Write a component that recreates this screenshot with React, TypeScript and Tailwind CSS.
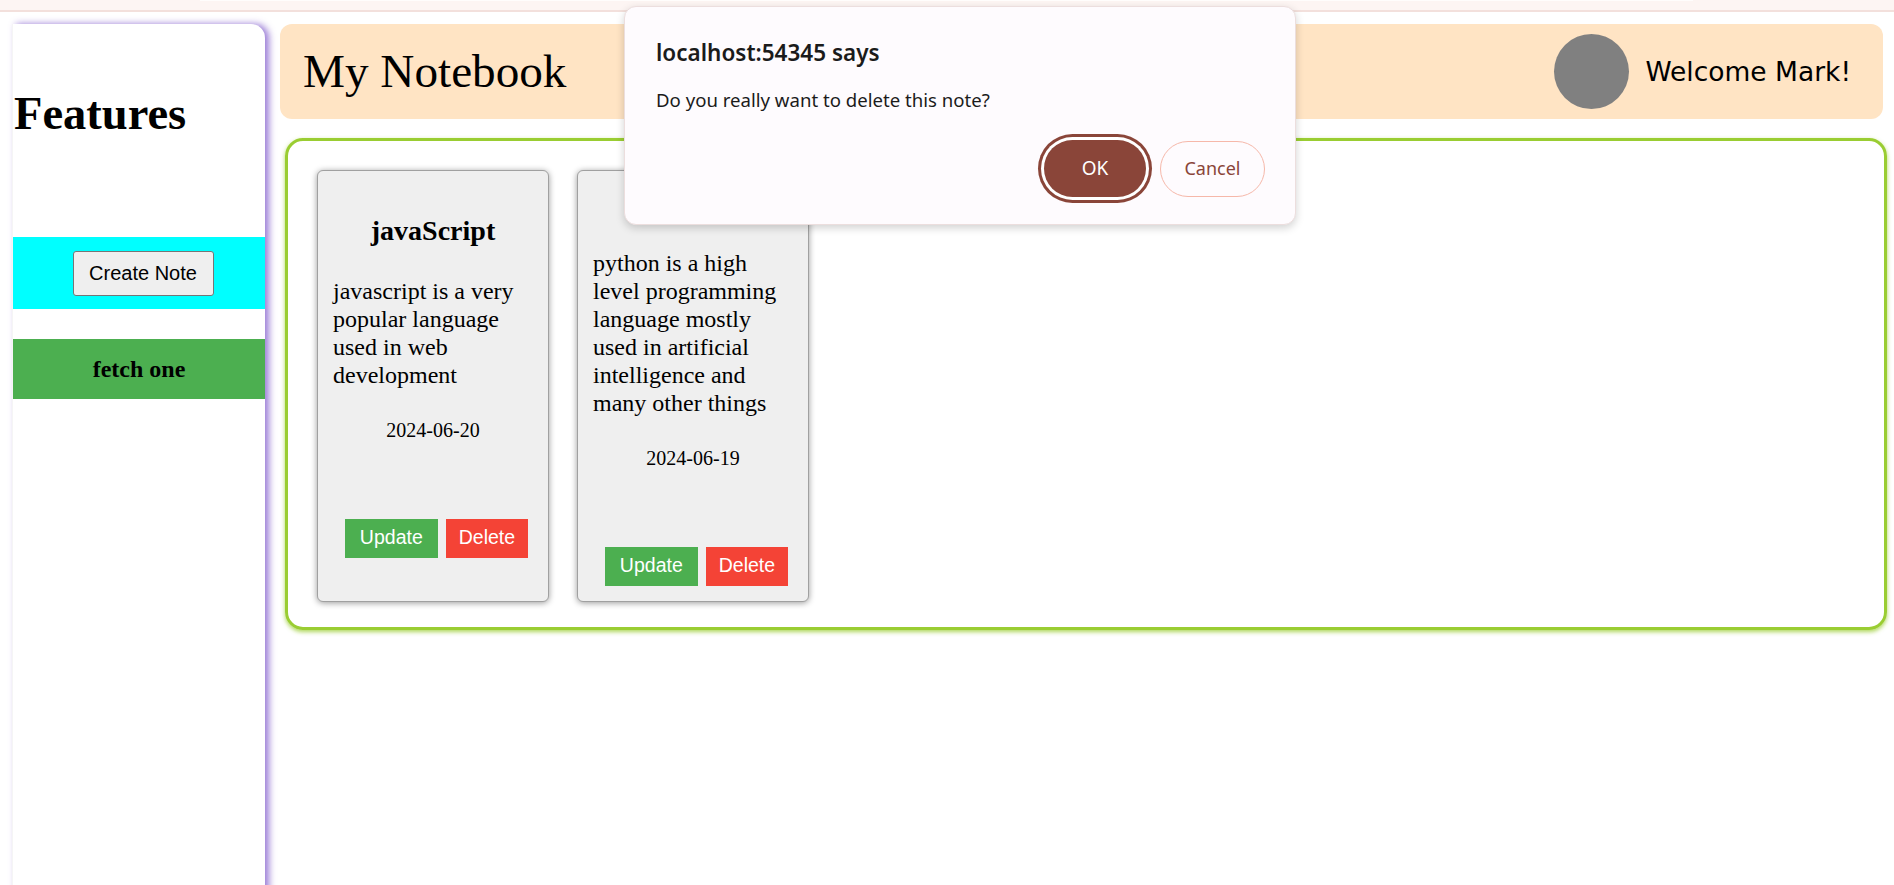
import React from "react";

const serif = "font-['Liberation_Serif','Times_New_Roman',serif]";
const sans = "font-['Liberation_Sans',Arial,sans-serif]";

function Card({ title, body, date }: { title: string; body: string; date: string }) {
  return (
    <div className="w-[232px] h-[432px] bg-[#efefef] border border-[#a0a0a0] rounded-[6px] shadow-[0_1px_6px_rgba(0,0,0,0.4)] flex flex-col justify-center px-[15px] text-black">
      <h3 className="text-[28px] leading-[32px] font-bold text-center">{title}</h3>
      <p className="mt-[30px] text-[24px] leading-[28px]">{body}</p>
      <div className="mt-[30px] text-[20px] leading-[23px] text-center">{date}</div>
      <div className="mt-[77px] flex justify-center gap-[8px] pl-[7px]">
        <button className={`h-[39px] px-[15px] bg-[#4caf50] text-white text-[19.5px] ${sans}`}>Update</button>
        <button className={`h-[39px] px-[13px] bg-[#f44336] text-white text-[19.5px] ${sans}`}>Delete</button>
      </div>
    </div>
  );
}

export default function App() {
  return (
    <div className={`relative w-[1894px] h-[885px] overflow-hidden bg-white ${serif}`}>
      {/* browser strip */}
      <div className="h-[12px] bg-[#fdf5f3] border-b-2 border-[#f3e0dc]">
        <div className="ml-[200px] w-[1493px] h-[1px] bg-[#fffdfc]" />
      </div>

      <div className="flex pl-[12px] pt-[12px] gap-[15px]">
        {/* sidebar */}
        <aside className="w-[253px] h-[873px] shrink-0 bg-white rounded-tr-[14px] border-l border-[#f5f5f5] shadow-[4px_0_7px_rgba(120,80,200,0.75)] flex flex-col">
          <h1 className="mt-[62px] pl-[1px] text-[46.5px] leading-[55px] font-bold text-black">Features</h1>
          <div className="mt-[96px] h-[72px] bg-[#00ffff] flex items-center justify-center pl-[8px]">
            <button className={`w-[141px] h-[45px] bg-[#efefef] border border-[#767676] rounded-[3px] text-[20px] text-black ${sans}`}>
              Create Note
            </button>
          </div>
          <div className="mt-[30px] h-[60px] bg-[#4caf50] flex items-center justify-center text-[24px] font-bold text-black">
            fetch one
          </div>
        </aside>

        {/* main */}
        <main className="w-[1607px] flex flex-col">
          <header className="w-[1603px] h-[95px] bg-[#ffe4c4] rounded-[12px] flex items-center justify-between pl-[23px] pr-[32px]">
            <div className="text-[47.2px] leading-[55px] text-black">My Notebook</div>
            <div className="flex items-center gap-[16px]">
              <div className="w-[75px] h-[75px] rounded-full bg-[#808080]" />
              <span className="font-['DejaVu_Sans',Verdana,sans-serif] text-[26.5px] text-black">Welcome Mark!</span>
            </div>
          </header>

          <section className="mt-[19px] ml-[5px] w-[1602px] h-[492px] border-[3px] border-[#9acd32] rounded-[18px] shadow-[0_2px_4px_rgba(154,205,50,0.8)] flex items-start gap-[28px] pl-[29px] pt-[29px]">
            <Card title="javaScript" body="javascript is a very popular language used in web development" date="2024-06-20" />
            <Card
              title="python"
              body="python is a high level programming language mostly used in artificial intelligence and many other things"
              date="2024-06-19"
            />
          </section>
        </main>
      </div>

      {/* alert dialog */}
      <div className="absolute left-[624px] top-[6px] w-[672px] h-[219px] bg-[#fefbfe] border border-[#ecdede] rounded-[12px] shadow-[0_3px_8px_rgba(0,0,0,0.18)] flex flex-col pl-[31px] pr-[30px] pt-[31px] font-['Noto_Sans',sans-serif] text-[#1b1b1b]">
        <div className="text-[22.5px] leading-[30px] font-semibold">localhost:54345 says</div>
        <div className="mt-[20px] text-[18.6px] leading-[24px]">Do you really want to delete this note?</div>
        <div className="mt-[28px] flex items-center justify-end gap-[14px]">
          <button className="w-[102px] h-[57px] rounded-full bg-[#8a4539] text-white text-[19px] shadow-[0_0_0_3px_#ffffff,0_0_0_6px_#8a4539]">
            OK
          </button>
          <button className="w-[105px] h-[56px] rounded-full border-[1.5px] border-[#f6b8aa] bg-[#fefbfe] text-[#8a4539] text-[18px]">
            Cancel
          </button>
        </div>
      </div>
    </div>
  );
}
